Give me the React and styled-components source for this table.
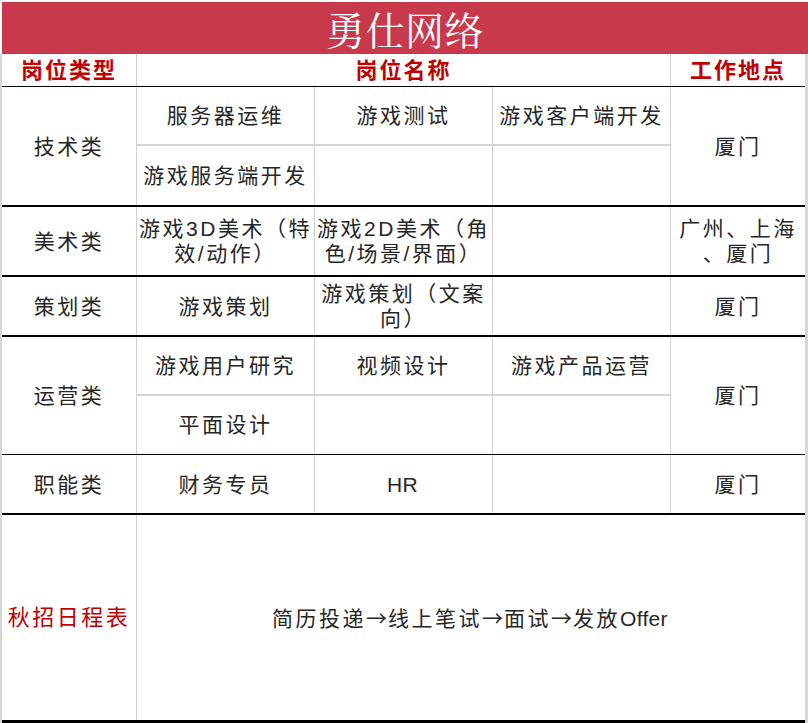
import React from "react";
import styled, { createGlobalStyle } from "styled-components";

const GlobalStyle = createGlobalStyle`
  html, body {
    margin: 0;
    padding: 0;
    background: #ffffff;
  }
  body {
    font-family: "Liberation Sans", "Noto Sans CJK SC", sans-serif;
    color: #262626;
  }
`;

const Page = styled.div`
  width: 808px;
  padding-top: 2px;
`;

const Banner = styled.h1`
  height: 52px;
  margin: 0 0 0 2px;
  background: #c83a4b;
  color: #ffffff;
  display: flex;
  align-items: center;
  justify-content: center;
  font-family: "Noto Serif CJK SC", "Noto Sans CJK SC", serif;
  font-size: 39px;
  font-weight: 400;
  letter-spacing: 0.5px;
`;

const Table = styled.div`
  border-left: 2px solid #d6d6d6;
  border-right: 3px solid #d6d6d6;
`;

const Group = styled.div`
  display: grid;
  grid-template-columns: ${(p) => p.$cols || "135px 534px 134px"};
  height: ${(p) => p.$height}px;
  box-sizing: border-box;
  border-bottom: ${(p) => p.$line || 2}px solid #000000;
`;

const Cell = styled.div`
  display: flex;
  flex-direction: column;
  align-items: center;
  justify-content: center;
  text-align: center;
  box-sizing: border-box;
  border-right: ${(p) => (p.$edge ? "none" : "1px solid #d0d0d0")};
  font-size: 21px;
  line-height: 25px;
  letter-spacing: 2.5px;
  white-space: nowrap;
`;

const HeadCell = styled(Cell)`
  color: #c00000;
  font-weight: 700;
  font-size: 22px;
  letter-spacing: 2px;
`;

const RedTitle = styled(Cell)`
  color: #c00000;
  font-size: 22px;
  letter-spacing: 2.5px;
`;

const JobGrid = styled.div`
  display: grid;
  grid-template-columns: repeat(3, 178px);
  grid-auto-rows: 1fr;
`;

const JobCell = styled(Cell)`
  border-bottom: ${(p) => (p.$divider ? "2px solid #d4d4d4" : "none")};
`;

const Latin = styled.span`
  letter-spacing: 0.3px;
  margin-right: 2px;
`;

const Arrow = styled.span`
  font-family: "Noto Sans CJK SC", sans-serif;
  letter-spacing: 0;
  margin-right: 1px;
`;

const Rich = ({ text }) =>
  text.split(/([A-Za-z]{2,}|→)/).map((part, i) => {
    if (part === "→") return <Arrow key={i}>→</Arrow>;
    if (/^[A-Za-z]{2,}$/.test(part)) return <Latin key={i}>{part}</Latin>;
    return part;
  });

const Lines = ({ text }) =>
  text.split("\n").map((line, i) => (
    <span key={i}>
      <Rich text={line} />
    </span>
  ));

const groups = [
  {
    name: "技术类",
    height: 120,
    line: 2,
    place: "厦门",
    jobs: [["服务器运维", "游戏测试", "游戏客户端开发"], ["游戏服务端开发", "", ""]],
  },
  {
    name: "美术类",
    height: 70,
    line: 2,
    place: "广州、上海\n、厦门",
    jobs: [["游戏3D美术（特\n效/动作）", "游戏2D美术（角\n色/场景/界面）", ""]],
  },
  {
    name: "策划类",
    height: 60,
    line: 2,
    place: "厦门",
    jobs: [["游戏策划", "游戏策划（文案\n向）", ""]],
  },
  {
    name: "运营类",
    height: 118,
    line: 1,
    place: "厦门",
    jobs: [["游戏用户研究", "视频设计", "游戏产品运营"], ["平面设计", "", ""]],
  },
  {
    name: "职能类",
    height: 60,
    line: 2,
    place: "厦门",
    jobs: [["财务专员", "HR", ""]],
  },
];

const App = () => (
  <>
    <GlobalStyle />
    <Page>
      <Banner>勇仕网络</Banner>
      <Table>
        <Group $height={33} $line={1}>
          <HeadCell>岗位类型</HeadCell>
          <HeadCell>岗位名称</HeadCell>
          <HeadCell $edge>工作地点</HeadCell>
        </Group>
        {groups.map((g) => (
          <Group key={g.name} $height={g.height} $line={g.line}>
            <Cell>{g.name}</Cell>
            <JobGrid>
              {g.jobs.map((row, r) =>
                row.map((job, c) => (
                  <JobCell key={`${r}-${c}`} $divider={r < g.jobs.length - 1}>
                    <Lines text={job} />
                  </JobCell>
                ))
              )}
            </JobGrid>
            <Cell $edge>
              <Lines text={g.place} />
            </Cell>
          </Group>
        ))}
        <Group $height={208} $line={3} $cols="135px 668px">
          <RedTitle>秋招日程表</RedTitle>
          <Cell $edge>
            <Lines text="简历投递→线上笔试→面试→发放Offer" />
          </Cell>
        </Group>
      </Table>
    </Page>
  </>
);

export default App;
